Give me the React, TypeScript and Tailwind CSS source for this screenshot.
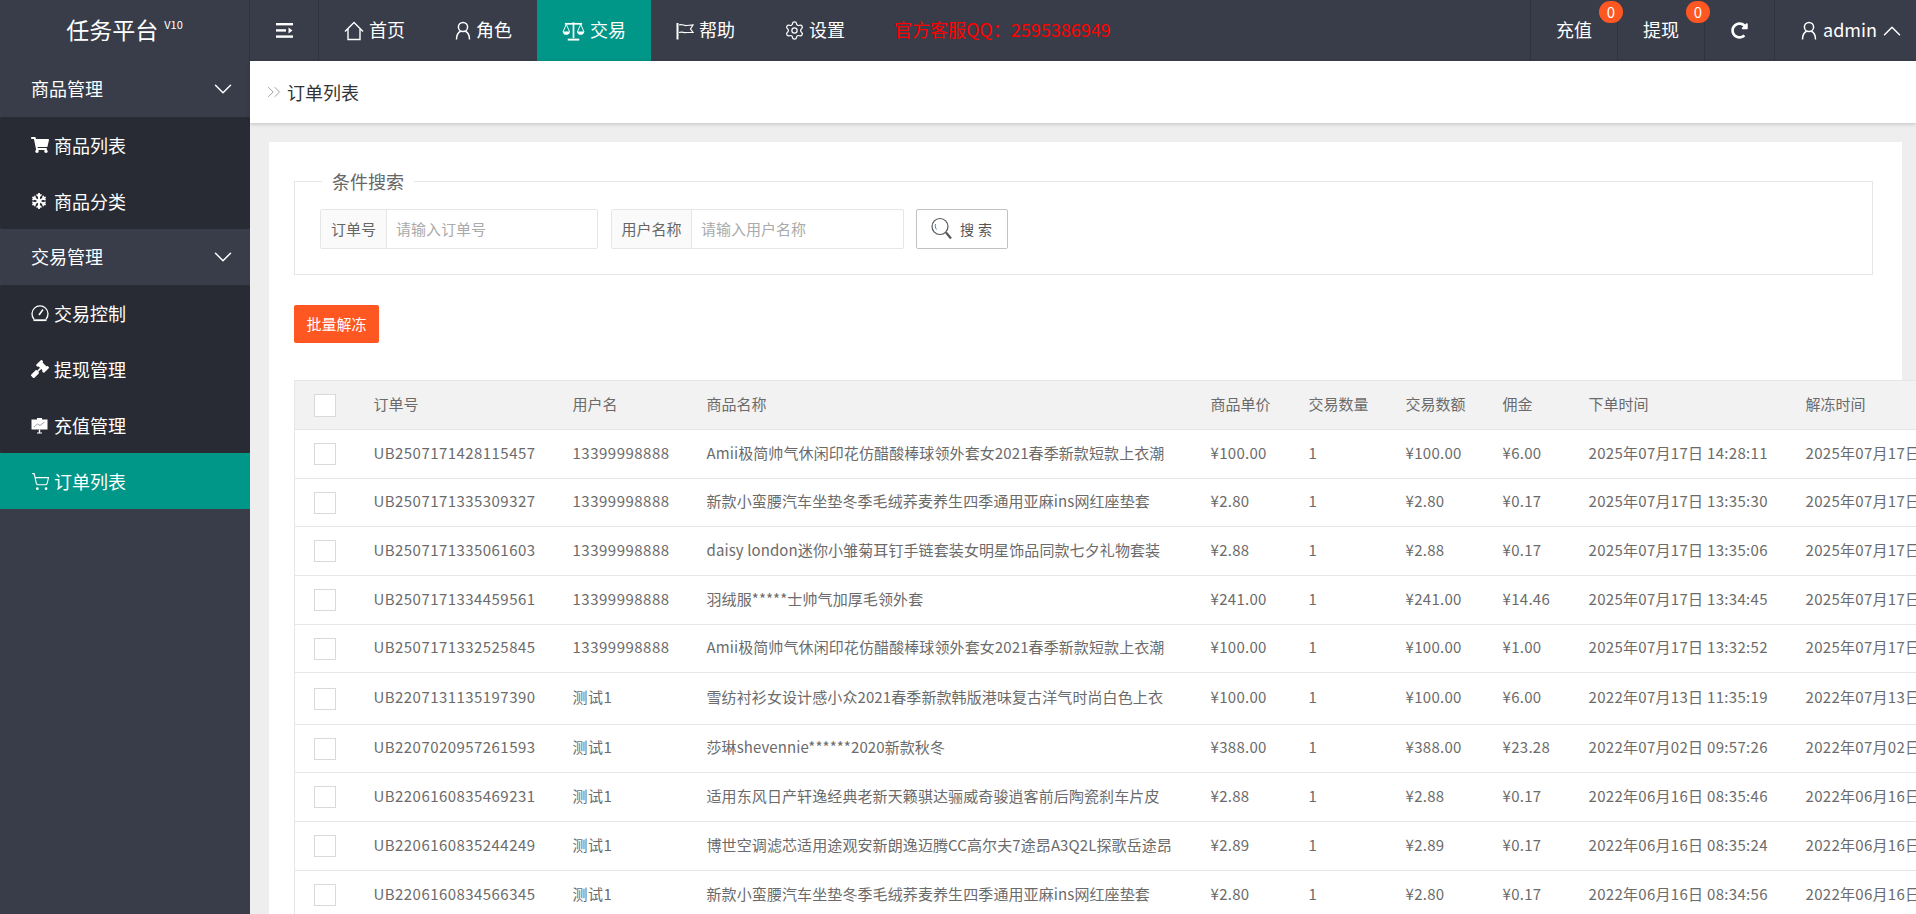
import { ChevronDown, ChevronUp, ChevronsRight, Settings, ShoppingCart } from "lucide-react";
import { FaGavel, FaRedoAlt, FaShoppingCart, FaSnowflake } from "react-icons/fa";

const font = "font-['Noto_Sans_CJK_SC','Noto_Sans',sans-serif]";

const orders = [
  ["UB2507171428115457", "13399998888", "Amii极简帅气休闲印花仿醋酸棒球领外套女2021春季新款短款上衣潮", "¥100.00", "¥100.00", "¥6.00", "2025年07月17日 14:28:11"],
  ["UB2507171335309327", "13399998888", "新款小蛮腰汽车坐垫冬季毛绒荞麦养生四季通用亚麻ins网红座垫套", "¥2.80", "¥2.80", "¥0.17", "2025年07月17日 13:35:30"],
  ["UB2507171335061603", "13399998888", "daisy london迷你小雏菊耳钉手链套装女明星饰品同款七夕礼物套装", "¥2.88", "¥2.88", "¥0.17", "2025年07月17日 13:35:06"],
  ["UB2507171334459561", "13399998888", "羽绒服*****士帅气加厚毛领外套", "¥241.00", "¥241.00", "¥14.46", "2025年07月17日 13:34:45"],
  ["UB2507171332525845", "13399998888", "Amii极简帅气休闲印花仿醋酸棒球领外套女2021春季新款短款上衣潮", "¥100.00", "¥100.00", "¥1.00", "2025年07月17日 13:32:52"],
  ["UB2207131135197390", "测试1", "雪纺衬衫女设计感小众2021春季新款韩版港味复古洋气时尚白色上衣", "¥100.00", "¥100.00", "¥6.00", "2022年07月13日 11:35:19"],
  ["UB2207020957261593", "测试1", "莎琳shevennie******2020新款秋冬", "¥388.00", "¥388.00", "¥23.28", "2022年07月02日 09:57:26"],
  ["UB2206160835469231", "测试1", "适用东风日产轩逸经典老新天籁骐达骊威奇骏逍客前后陶瓷刹车片皮", "¥2.88", "¥2.88", "¥0.17", "2022年06月16日 08:35:46"],
  ["UB2206160835244249", "测试1", "博世空调滤芯适用途观安新朗逸迈腾CC高尔夫7途昂A3Q2L探歌岳途昂", "¥2.89", "¥2.89", "¥0.17", "2022年06月16日 08:35:24"],
  ["UB2206160834566345", "测试1", "新款小蛮腰汽车坐垫冬季毛绒荞麦养生四季通用亚麻ins网红座垫套", "¥2.80", "¥2.80", "¥0.17", "2022年06月16日 08:34:56"],
];

const rowHeights = ["h-[49px]", "h-[48px]", "h-[49px]", "h-[49px]", "h-[48px]", "h-[52px]", "h-[48px]", "h-[49px]", "h-[49px]", "h-[49px]"];

function MenuFoldIcon() {
  return (
    <svg width="17" height="15" viewBox="0 0 17 15" fill="white">
      <rect x="0" y="0" width="17" height="2.4" />
      <rect x="0" y="6.2" width="10" height="2.4" />
      <rect x="0" y="12.4" width="17" height="2.4" />
      <path d="M12.5 4.4 L16.5 7.4 L12.5 10.4 Z" />
    </svg>
  );
}

function HomeIcon() {
  return (
    <svg width="20" height="20" viewBox="0 0 20 20" fill="none" stroke="white" strokeWidth="1.4">
      <path d="M1 10.5 L10 1.5 L19 10.5" />
      <path d="M4 8 V18.5 H16 V8" />
    </svg>
  );
}

function PersonIcon() {
  return (
    <svg width="16" height="19" viewBox="0 0 15 19" fill="none" stroke="white" strokeWidth="1.5">
      <circle cx="7.5" cy="6" r="4.6" />
      <path d="M1 18.5 C1 14 3.2 11 5.2 10.2 M14 18.5 C14 14 11.8 11 9.8 10.2" />
    </svg>
  );
}

function ScaleIcon() {
  return (
    <svg width="23" height="20" viewBox="0 0 24 20" fill="none" stroke="white" strokeWidth="1.5">
      <path d="M3 2.5 H21" strokeWidth="1.8" />
      <path d="M12 1 V17.5" strokeWidth="1.8" />
      <path d="M6 19 H18" strokeWidth="2" />
      <path d="M4.5 3 L1 11 H8 Z M19.5 3 L16 11 H23 Z" strokeWidth="1" />
      <path d="M0.8 11 C1.5 15 7.5 15 8.2 11 Z M15.8 11 C16.5 15 22.5 15 23.2 11 Z" fill="white" stroke="none" />
    </svg>
  );
}

function FlagIcon() {
  return (
    <svg width="18" height="18" viewBox="0 0 18 18" fill="none" stroke="white">
      <path d="M1.5 1 V17.5" strokeWidth="2" />
      <path d="M3 3 C6 1.5 8 4 10.5 3.5 L17 3 L14.5 7 L17 10.5 L10.5 10.5 C8 11 6 9.5 3 10.5" strokeWidth="1.2" />
    </svg>
  );
}

function GaugeIcon() {
  return (
    <svg width="18" height="18" viewBox="0 0 18 18" fill="none" stroke="white" strokeWidth="1.3">
      <path d="M3 15.2 A8 8 0 1 1 15 15.2" />
      <path d="M2.5 16.2 H15.5" strokeWidth="1.8" />
      <path d="M8 11 L12 5.5" strokeWidth="1.6" />
    </svg>
  );
}

function BoardIcon() {
  return (
    <svg width="17" height="17" viewBox="0 0 17 17" fill="white">
      <rect x="6" y="1" width="5" height="2" />
      <rect x="0.5" y="2.5" width="16" height="10" />
      <path d="M3 10 L6.5 7 L9 8.5 L13.5 5" fill="none" stroke="#9aa0ad" strokeWidth="1" />
      <rect x="7.8" y="12.5" width="1.4" height="3.5" />
      <rect x="6" y="15.5" width="5" height="1" />
    </svg>
  );
}

function LensIcon() {
  return (
    <svg width="22" height="24" viewBox="0 0 22 24" fill="none" stroke="#555">
      <circle cx="9" cy="9.5" r="8" strokeWidth="1.2" />
      <path d="M4.5 7 C4 9 4.3 11 5.5 12.5" strokeWidth="1" stroke="#4a7fb0" />
      <path d="M15 15.5 L20 21.5" strokeWidth="2.2" />
    </svg>
  );
}

function SideItem({ icon, label, active }: { icon: React.ReactNode; label: string; active?: boolean }) {
  return (
    <div className={`flex h-14 items-center pl-[31px] text-[18px] text-white ${active ? "bg-[#009688]" : ""}`}>
      <span className="flex w-[23px] shrink-0 items-center">{icon}</span>
      <span>{label}</span>
    </div>
  );
}

function SideGroup({ label }: { label: string }) {
  return (
    <div className="flex h-14 items-center justify-between pl-[31px] pr-[12px] text-[18px] text-white">
      <span className="pb-[2px]">{label}</span>
      <ChevronDown size={30} strokeWidth={1.2} />
    </div>
  );
}

function NavItem({ icon, label, active }: { icon: React.ReactNode; label: string; active?: boolean }) {
  return (
    <div className={`flex h-[61px] items-center gap-[5px] px-[25px] text-[18px] text-white ${active ? "bg-[#009688]" : ""}`}>
      {icon}
      <span className="pb-[2px]">{label}</span>
    </div>
  );
}

function Badge() {
  return (
    <span className="absolute right-[-6px] top-[1px] flex h-[22px] w-[24px] items-center justify-center rounded-full bg-[#FF5722] text-[15px] text-white">
      0
    </span>
  );
}

function CheckBox({ tall }: { tall?: boolean }) {
  return <div className={`ml-[19px] w-[22px] border border-[#d9d9d9] bg-white ${tall ? "h-[23px]" : "h-[22px]"}`} />;
}

function SearchField({ label, placeholder, labelWidth, width }: { label: string; placeholder: string; labelWidth: string; width: string }) {
  return (
    <div className={`flex h-[40px] rounded-[2px] border border-[#e6e6e6] text-[15px] ${width}`}>
      <div className={`flex shrink-0 items-center justify-center border-r border-[#e6e6e6] bg-[#fafafa] text-[#666] ${labelWidth}`}>{label}</div>
      <div className="flex flex-1 items-center pl-[9px] text-[#aaa]">{placeholder}</div>
    </div>
  );
}

export default function App() {
  const cell = "pl-[15px] pr-[15px] pb-[2px] text-[15px] text-[#6b6b6b] whitespace-nowrap overflow-hidden";
  return (
    <div className={`flex h-[914px] w-[1916px] flex-col overflow-hidden bg-[#eeeeee] ${font}`}>
      {/* Header */}
      <div className="flex h-[61px] shrink-0 items-stretch bg-[#393D49]">
        <div className="relative flex w-[250px] shrink-0 items-center justify-center border-r border-[#30333d] pb-[3px] text-[23px] text-white">
          任务平台<sup className="ml-[6px] text-[11px] font-normal">V10</sup>
        </div>
        <div className="flex w-[69px] shrink-0 items-center justify-center border-r border-[#30333d]">
          <MenuFoldIcon />
        </div>
        <NavItem icon={<HomeIcon />} label="首页" />
        <NavItem icon={<PersonIcon />} label="角色" />
        <NavItem active icon={<ScaleIcon />} label="交易" />
        <NavItem icon={<FlagIcon />} label="帮助" />
        <NavItem icon={<Settings size={21} strokeWidth={1.4} className="-mx-[1px]" />} label="设置" />
        <div className="ml-[24px] flex items-center pb-[2px] text-[18px] text-[#ff0000]">官方客服QQ：2595386949</div>
        <div className="ml-auto flex items-stretch text-[18px] text-white">
          <div className="relative flex w-[88px] items-center justify-center border-x border-[#30333d] pb-[2px]">
            充值
            <Badge />
          </div>
          <div className="relative flex w-[87px] items-center justify-center border-r border-[#30333d] pb-[2px]">
            提现
            <Badge />
          </div>
          <div className="flex w-[70px] items-center justify-center border-r border-[#30333d]">
            <FaRedoAlt size={17} />
          </div>
          <div className="flex w-[141px] items-center pl-[26px]">
            <PersonIcon />
            <span className="ml-[6px] pb-[2px]">admin</span>
            <ChevronUp size={30} strokeWidth={1.2} />
          </div>
        </div>
      </div>

      <div className="flex min-h-0 flex-1">
        {/* Sidebar */}
        <div className="w-[250px] shrink-0 bg-[#393D49]">
          <SideGroup label="商品管理" />
          <div className="rounded-[2px] bg-[#282B33]">
            <SideItem icon={<FaShoppingCart size={18} />} label="商品列表" />
            <SideItem icon={<FaSnowflake size={16} />} label="商品分类" />
          </div>
          <SideGroup label="交易管理" />
          <div className="rounded-[2px] bg-[#282B33]">
            <SideItem icon={<GaugeIcon />} label="交易控制" />
            <SideItem icon={<FaGavel size={18} />} label="提现管理" />
            <SideItem icon={<BoardIcon />} label="充值管理" />
          </div>
          <SideItem active icon={<ShoppingCart size={19} strokeWidth={1.4} />} label="订单列表" />
        </div>

        {/* Main */}
        <div className="min-w-0 flex-1">
          <div className="flex h-[62px] items-center gap-[2px] bg-white pl-[13px] text-[18px] text-[#333] shadow-[0_1px_4px_rgba(0,0,0,0.2)]">
            <ChevronsRight size={22} strokeWidth={1} className="text-[#999]" />
            <span>订单列表</span>
          </div>
          <div className="ml-[19px] mr-[14px] mt-[19px] h-[800px] bg-white pl-[25px] pt-[39px]">
            {/* Search */}
            <div className="relative mr-[29px] h-[94px] border border-[#e6e6e6] pl-[25px] pt-[27px]">
              <div className="absolute left-[27px] top-[-14px] bg-white px-[10px] text-[18px] leading-[26px] text-[#666]">条件搜索</div>
              <div className="flex items-center gap-[13px]">
                <SearchField label="订单号" placeholder="请输入订单号" labelWidth="w-[66px]" width="w-[278px]" />
                <SearchField label="用户名称" placeholder="请输入用户名称" labelWidth="w-[80px]" width="w-[293px]" />
                <div className="ml-[-1px] flex h-[40px] w-[92px] items-center justify-center gap-[7px] rounded-[2px] border border-[#c2c2c2] pl-[3px] text-[14px] tracking-[4px] text-[#555]">
                  <LensIcon />
                  搜索
                </div>
              </div>
            </div>

            <div className="mt-[30px] flex h-[38px] w-[85px] items-center justify-center rounded-[2px] bg-[#FF5722] text-[15px] text-white">批量解冻</div>

            {/* Orders table */}
            <table className="mt-[37px] w-[1800px] table-fixed border-collapse border-l border-t border-[#e6e6e6] bg-white">
              <colgroup>
                <col className="w-[64px]" />
                <col className="w-[199px]" />
                <col className="w-[134px]" />
                <col className="w-[504px]" />
                <col className="w-[98px]" />
                <col className="w-[97px]" />
                <col className="w-[97px]" />
                <col className="w-[86px]" />
                <col className="w-[217px]" />
                <col className="w-[304px]" />
              </colgroup>
              <thead>
                <tr className="h-[49px] border-b border-[#e6e6e6] bg-[#f2f2f2] text-left">
                  <th className="font-normal"><CheckBox tall /></th>
                  {["订单号", "用户名", "商品名称", "商品单价", "交易数量", "交易数额", "佣金", "下单时间", "解冻时间"].map((h) => (
                    <th key={h} className={`${cell} font-normal`}>{h}</th>
                  ))}
                </tr>
              </thead>
              <tbody>
                {orders.map((o, i) => (
                  <tr key={o[0]} className={`border-b border-[#e6e6e6] ${rowHeights[i]}`}>
                    <td><CheckBox /></td>
                    <td className={`${cell} tracking-[0.45px]`}>{o[0]}</td>
                    <td className={`${cell} tracking-[0.5px]`}>{o[1]}</td>
                    <td className={`${cell} tracking-[0.1px]`}>{o[2]}</td>
                    <td className={`${cell} tracking-[0.3px]`}>{o[3]}</td>
                    <td className={cell}>1</td>
                    <td className={`${cell} tracking-[0.3px]`}>{o[4]}</td>
                    <td className={`${cell} tracking-[0.3px]`}>{o[5]}</td>
                    <td className={`${cell} tracking-[0.3px]`}>{o[6]}</td>
                    <td className={`${cell} tracking-[0.3px]`}>{o[6]}</td>
                  </tr>
                ))}
              </tbody>
            </table>
          </div>
        </div>
      </div>
    </div>
  );
}
